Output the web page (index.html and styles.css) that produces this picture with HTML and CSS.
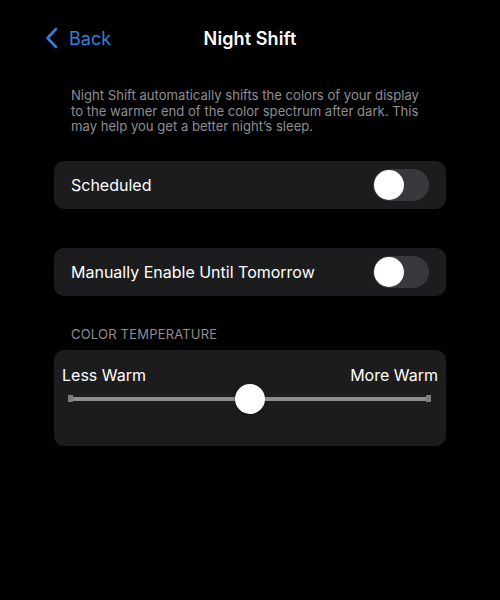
FILE: index.html
```html
<!DOCTYPE html>
<html lang="en">
<head>
  <meta charset="UTF-8">
  <meta name="viewport" content="width=device-width, initial-scale=1.0">
  <title>Night Shift</title>
  <link rel="stylesheet" href="styles.css">
</head>
<body>

  <header class="nav">
    <a class="back" href="#">
      <svg class="chevron" width="14" height="22" viewBox="0 0 14 22">
        <path d="M11 2 L2.5 11 L11 20" fill="none" stroke="currentColor" stroke-width="2.6" stroke-linecap="round" stroke-linejoin="round"/>
      </svg>
      <span>Back</span>
    </a>
    <h1>Night Shift</h1>
    <span></span>
  </header>

  <main class="content">
    <p class="note">Night Shift automatically shifts the colors of your display<br>to the warmer end of the color spectrum after dark. This<br>may help you get a better night’s sleep.</p>

    <div class="row">
      <span>Scheduled</span>
      <div class="switch"><span class="knob"></span></div>
    </div>

    <div class="row second">
      <span>Manually Enable Until Tomorrow</span>
      <div class="switch"><span class="knob"></span></div>
    </div>

    <h2 class="label">COLOR TEMPERATURE</h2>

    <div class="temp">
      <div class="ends">
        <span>Less Warm</span>
        <span>More Warm</span>
      </div>
      <div class="slider">
        <span class="cap"></span>
        <span class="line"></span>
        <span class="thumb"></span>
        <span class="line"></span>
        <span class="cap"></span>
      </div>
    </div>
  </main>

</body>
</html>
```

FILE: styles.css
```css
* {
  margin: 0;
  padding: 0;
  box-sizing: border-box;
}

body {
  background: #000;
  color: #fff;
  font-family: Inter, "Noto Sans", sans-serif;
}

.nav {
  height: 76px;
  padding: 0 45px;
  display: grid;
  grid-template-columns: 1fr auto 1fr;
  align-items: center;
}

.back {
  display: flex;
  align-items: center;
  gap: 10px;
  color: #3181dc;
  text-decoration: none;
  font-size: 18px;
}

.nav h1 {
  font-size: 18px;
  font-weight: 600;
  letter-spacing: 0.1px;
}

.content {
  margin: 0 54px;
}

.note {
  margin-top: 12px;
  padding-left: 17px;
  font-size: 13.1px;
  line-height: 15.5px;
  color: #8e8e93;
  white-space: nowrap;
}

.row {
  margin-top: 26px;
  height: 48px;
  background: #1c1c1e;
  border-radius: 10px;
  padding: 0 17px;
  display: flex;
  align-items: center;
  justify-content: space-between;
  font-size: 16px;
}

.row.second {
  margin-top: 39px;
}

/* off state, knob on the left */
.switch {
  width: 56px;
  height: 32px;
  border-radius: 16px;
  background: #39393d;
  padding: 1px;
  display: flex;
}

.knob {
  width: 30px;
  height: 30px;
  border-radius: 50%;
  background: #fff;
}

.label {
  margin: 31px 0 8px;
  padding-left: 17px;
  font-size: 13px;
  line-height: 15px;
  font-weight: 400;
  letter-spacing: 0.2px;
  color: #8e8e93;
}

.temp {
  height: 96px;
  background: #1c1c1e;
  border-radius: 10px;
  padding: 15px 8px 0;
}

.ends {
  display: flex;
  justify-content: space-between;
  font-size: 16px;
  line-height: 20px;
}

.slider {
  margin: -1px 7px 0 6px;
  height: 30px;
  display: flex;
  align-items: center;
}

.slider .cap {
  width: 5px;
  height: 7px;
  background: #7d7d80;
}

.slider .line {
  flex: 1;
  height: 4px;
  background: #8e8e91;
}

.slider .thumb {
  width: 30px;
  height: 30px;
  border-radius: 50%;
  background: #fff;
  box-shadow: 0 1px 3px rgba(0, 0, 0, 0.35);
}
```
